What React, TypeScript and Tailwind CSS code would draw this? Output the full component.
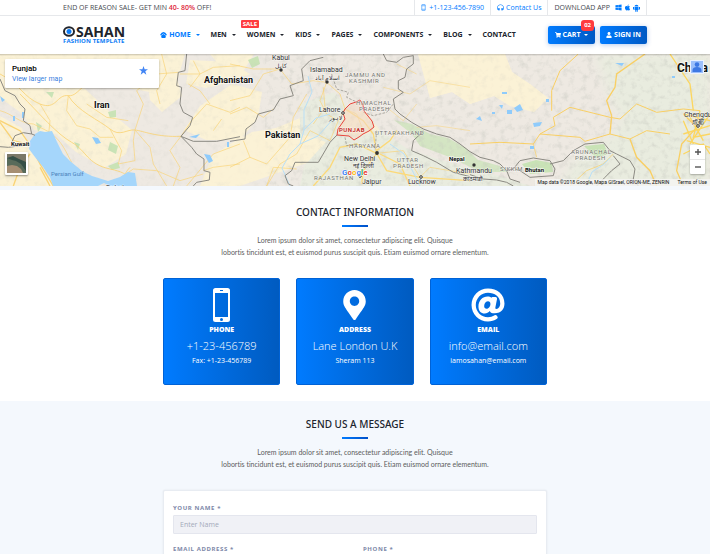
import type { ReactNode } from 'react';
import { FaApple, FaAt, FaHeadphonesAlt, FaMapMarkerAlt, FaShoppingCart, FaUser, FaWindows } from 'react-icons/fa';

function PhoneIcon({ className }: { className: string }) {
  return (
    <svg viewBox="0 0 17 34" className={className} aria-hidden="true">
      <path
        fill="currentColor"
        fillRule="evenodd"
        d="M2.5 0h12A2.5 2.5 0 0 1 17 2.500v29a2.500 2.500 0 0 1-2.500 2.500h-12A2.500 2.500 0 0 1 0 31.500v-29A2.500 2.500 0 0 1 2.500 0zM2 5v24h13V5zM7 2v1h3V2zM8.500 30a1.500 1.500 0 1 0 0 3 1.500 1.500 0 0 0 0-3z"
      />
    </svg>
  );
}

function AndroidIcon() {
  return (
    <svg viewBox="0 0 14 16" className="h-[8px] w-[7px]" aria-hidden="true" fill="currentColor">
      <path d="M3 5a4 3.600 0 0 1 8 0zM3 5.800h8V12H3zM0 6h2v5H0zM12 6h2v5h-2zM4.500 12h2v3.500h-2zM7.500 12h2v3.500h-2z" />
    </svg>
  );
}

function HomeIcon() {
  return (
    <svg viewBox="0 0 18 16" className="h-[6px] w-[7px]" aria-hidden="true" fill="currentColor">
      <path d="M9 0 14 2 18 7 16 9 9 4 2 9 0 7 4 2z" />
      <path d="M9 5.500 15.500 10 14 16H4L2.500 10z" />
    </svg>
  );
}

function Logo() {
  return (
    <a href="#" className="flex shrink-0 flex-col">
      <span className="flex items-center text-[14px] leading-[11px] font-bold text-[#20242c]">
        <svg viewBox="0 0 13 11" className="h-[11px] w-[13px]" role="img" aria-label="O">
          <ellipse cx="6" cy="5.500" rx="5" ry="4.300" fill="none" stroke="#20242c" strokeWidth="2" />
          <circle cx="6" cy="5.500" r="2.500" fill="#0b7bf5" />
        </svg>
        SAHAN
      </span>
      <span className="mt-px text-[6px] leading-[7px] font-bold tracking-wide text-[#0b7bf5]">FASHION TEMPLATE</span>
    </a>
  );
}

function Caret() {
  return <span className="border-x-2 border-t-2 border-x-transparent border-t-current" />;
}

function TopBar() {
  return (
    <div className="border-b border-[#e6e8eb]">
      <div className="mx-auto flex h-[15px] max-w-[584px] items-center justify-between text-[7px] leading-[15px] text-[#44484e]">
        <p>
          END OF REASON SALE- GET MIN <span className="font-semibold text-[#e0283c]">40- 80%</span> OFF!
        </p>
        <div className="flex border-x border-[#e6e8eb]">
          <a href="#" className="flex items-center gap-[3px] px-[6px] text-[#007bff]">
            <svg viewBox="0 0 10 16" className="h-[7px] w-[5px]" aria-hidden="true" fill="none" stroke="currentColor">
              <rect x="1" y="1" width="8" height="14" rx="1.500" strokeWidth="1.200" />
              <path d="M1 4h8M1 12h8" strokeWidth="1.200" />
            </svg>
            +1-123-456-7890
          </a>
          <a href="#" className="flex items-center gap-[2px] border-x border-[#e6e8eb] px-[6px] text-[#007bff]">
            <FaHeadphonesAlt className="size-[7px]" />
            Contact Us
          </a>
          <div className="flex items-center gap-[2px] px-[6px]">
            <span className="mr-[3px]">DOWNLOAD APP</span>
            <a href="#" aria-label="Windows" className="text-[#007bff]"><FaWindows className="size-[7px]" /></a>
            <a href="#" aria-label="Apple" className="text-[#007bff]"><FaApple className="size-[7px]" /></a>
            <a href="#" aria-label="Android" className="text-[#007bff]"><AndroidIcon /></a>
          </div>
        </div>
      </div>
    </div>
  );
}

const links = [
  { label: 'MEN', caret: true },
  { label: 'WOMEN', caret: true, sale: true },
  { label: 'KIDS', caret: true },
  { label: 'PAGES', caret: true },
  { label: 'COMPONENTS', caret: true },
  { label: 'BLOG', caret: true },
  { label: 'CONTACT', caret: false },
];

function Header() {
  return (
    <header>
      <div className="mx-auto flex h-[38px] max-w-[584px] items-center">
        <Logo />
        <nav className="ml-[35px] flex items-center gap-[11px] text-[7px] font-bold text-[#20242c]">
          <a href="#" className="flex items-center gap-[2px] text-[#007bff]">
            <HomeIcon />
            <span className="mr-[3px]">HOME</span>
            <Caret />
          </a>
          {links.map((l) => (
            <a key={l.label} href="#" className="relative flex items-center gap-[5px]">
              {l.label}
              {l.caret && <Caret />}
              {l.sale && (
                <span className="absolute -top-[10px] -left-[6px] rounded-[1px] bg-[#ff3b3f] px-[2px] text-[6px] leading-[8px] text-white">
                  SALE
                </span>
              )}
            </a>
          ))}
        </nav>
        <div className="ml-auto flex gap-[5px] text-[7px] font-bold text-white">
          <button className="relative flex h-[18px] w-[47px] items-center justify-center gap-[2px] rounded-[2px] bg-linear-to-r from-[#007bff] to-[#0059c4] shadow-[0_1px_5px_rgba(0,80,200,0.3)]">
            <FaShoppingCart className="size-[6px]" />
            <span className="mr-[2px]">CART</span>
            <Caret />
            <span className="absolute -top-[6px] right-px rounded-[3px] bg-[#ff3b3f] px-[3px] text-[6px] leading-[11px]">02</span>
          </button>
          <button className="flex h-[18px] w-[47px] items-center justify-center gap-[2px] rounded-[2px] bg-linear-to-r from-[#007bff] to-[#0059c4] shadow-[0_1px_5px_rgba(0,80,200,0.3)]">
            <FaUser className="size-[6px]" />
            SIGN IN
          </button>
        </div>
      </div>
    </header>
  );
}

function MapDrawing() {
  return (
    <svg
      viewBox="0 54 710 132"
      preserveAspectRatio="xMidYMid slice"
      className="block h-[132px] w-full font-[Roboto,sans-serif]"
      role="img"
      aria-label="Map of Punjab"
    >
      <defs>
        <filter id="relief" x="0" y="0" width="100%" height="100%">
          <feTurbulence type="fractalNoise" baseFrequency="0.160" numOctaves="4" seed="8" />
          <feColorMatrix values="0 0 0 0 0.550  0 0 0 0 0.560  0 0 0 0 0.510  1.800 0 0 0 -0.860" />
        </filter>
        <filter id="soft"><feGaussianBlur stdDeviation="5" /></filter>
      </defs>
      <rect y="54" width="710" height="132" fill="#eee9e2" />

      {/* lowland and desert tints */}
      <g fill="#fbf2d6">
        <path d="M0 54H185L178 78 150 92 128 88 108 76 84 88 110 112 132 130 126 154 104 168 76 152 56 134 34 130 20 112 0 98z" />
        <path d="M0 116 22 128 30 150 44 170 54 186H0z" />
        <path d="M184 130 200 106 232 84 262 92 258 118 240 140 206 140z" />
        <path d="M146 70 176 76 182 96 162 112 150 100z" />
        <path d="M230 144 252 132 276 128 300 118 322 128 336 134 322 148 310 162 286 170 240 186H200L212 156z" />
        <path d="M190 60 230 62 250 74 232 82 206 88 186 84z" />
        <path d="M418 54H505L512 72 530 84 548 98 534 112 510 106 494 96 470 104 452 92 430 98 424 76z" />
        <path d="M210 54H254L244 70 220 66z" />
      </g>
      <g fill="#e9ecdf">
        <path d="M300 104 334 92 352 112 380 130 406 148 440 160 500 176 530 186H300L304 166 326 142 300 134z" />
        <path d="M595 54H710V186H560L574 160 606 140 622 120 610 96z" filter="url(#soft)" />
      </g>
      <path fill="#f6efd8" d="M344 110 366 112 380 130 358 136 338 132z" />
      <g fill="#c9e3b6">
        <path d="M394 120 412 124 430 134 448 138 466 148 478 160 500 166 508 172 480 172 452 158 420 146 412 134z" opacity=".7" />
        <path d="M522 164 536 160 552 163 553 172 530 174zM584 146 604 144 608 154 596 158z" />
        <path d="M248 60 258 56 260 64 252 68zM108 112 116 110 116 117 110 118zM110 142 118 146 116 154 108 150zM108 166 118 162 120 168 112 170zM46 92 54 92 52 98zM74 142 80 144 78 150zM36 122 42 126 38 132z" />
      </g>
      <rect x="265" y="54" width="445" height="132" filter="url(#relief)" opacity=".6" />
      <rect x="0" y="54" width="265" height="132" filter="url(#relief)" opacity=".25" />
      <path fill="#fbf2d6" opacity=".6" d="M232 146 254 134 280 132 322 138 306 160 240 182H206z" />
      <path fill="#fbf2d6" opacity=".6" d="M418 54H505L512 72 530 84 548 98 534 112 510 106 494 96 470 104 452 92 430 98 424 76z" />

      {/* roads, left third */}
      <g fill="none" stroke="#f9d375" strokeWidth="2.500" transform="translate(0 54) scale(.3333)">
        <path d="M0 60C60 90 70 130 120 150S170 120 205 125 250 60 320 95M205 125C230 170 300 200 330 225S380 225 405 228 470 250 543 247M60 120C120 180 170 240 215 265S260 330 330 345 360 372 390 340" />
        <path d="M0 170C40 180 60 210 100 210L150 235C190 265 200 300 215 325M330 225 365 290 355 330 405 320 400 260 405 228M405 228 430 150 410 110 470 60 535 55" strokeWidth="2" />
        <path d="M0 200 60 230 95 280 120 330 160 396M0 205 40 260 80 270M90 300 60 340 40 396M120 340 150 396" strokeWidth="4" />
        <path d="M120 150 150 200 145 250M205 125 200 170 230 215 270 225 300 250 340 250M260 150 320 190 385 200M405 228 450 280 460 330 500 396M543 247 510 290 540 340 520 396M360 372 400 345 470 350 540 380 610 360" strokeWidth="2" />
        <path d="M543 247 575 200 620 150 690 175 720 160M630 150 600 110 565 90M570 100 600 60 580 20M720 270 640 300 560 396M720 330 640 340 610 350M640 230 665 195" strokeWidth="2" />
        <path d="M485 0 500 60 470 110 480 150M540 60 600 60 640 40 720 35" strokeWidth="2" />
      </g>
      {/* roads, middle third */}
      <g fill="none" stroke="#f9d375" strokeWidth="2" transform="translate(230 54) scale(.3333)">
        <path d="M0 30 70 45 150 45 185 90 250 80 290 85 330 120 345 165 325 200 300 260 240 230 200 300 150 330 110 396M290 85 270 140 290 180 325 200M0 140 60 125 100 60 150 45M0 180 50 160 100 190 130 165" />
        <path d="M345 165 400 200 430 240 440 298 470 350 570 370 720 380M440 298 400 350 395 390M440 298 380 270 330 280 300 340 250 396M450 300 510 330 540 396M440 290 480 260 500 230" strokeWidth="4" stroke="#fcd978" />
        <path d="M0 340 60 310 110 330 180 250 190 190 230 120M60 310 40 260M110 396 130 340 200 345M345 165 380 180 400 230M440 298 520 290 570 370 600 340 720 360M280 100 285 160 250 210" />
        <path d="M470 160 520 200 560 150M460 100 540 120 600 80 720 100M500 30 560 60M720 230 620 215 560 220" strokeWidth="1.500" />
      </g>
      {/* roads, right third */}
      <g fill="none" stroke="#f9cf63" strokeWidth="3" transform="translate(470 54) scale(.3333)">
        <path d="M325 0 270 50 245 110 245 170M0 270 90 265 190 270 210 240 255 215 250 190 300 160 340 170 420 190 450 195 500 150 560 175 640 165 690 170M210 240 270 245 330 250 345 262 420 240 480 255 530 230 600 240" />
        <path d="M525 0 440 60 435 100 410 140 425 185M425 185 420 240M480 255 500 310 540 350 560 396M640 396 620 350 635 270 680 220 640 180" strokeWidth="4" />
        <path d="M640 180 720 200M640 240 720 215M650 260 720 280M660 190 700 260M690 170 670 250 720 240M720 180 660 270M600 0 640 60 660 90 670 170M640 300 700 270 720 300M640 200 670 270" strokeWidth="4" stroke="#fcd65f" />
        <path d="M300 396 350 350 400 330 430 300M190 270 200 310" strokeWidth="2" />
      </g>

      {/* water */}
      <path
        fill="#a5d6fb"
        d="M35 134 40 131 45 132 52 131 57 142 63 154 70 161 82 171 92 176 108 181 120 177 128 172 135 173 137 186 110 186 104 183 98 186 53 186 50 177 43 167 35 157 29 149 30 141z"
      />
      <g fill="#8fcbfb">
        <path d="M92 137 98 138 101 143 96 144zM204 154 210 155 213 161 209 163zM189 137 200 134 196 138zM227 142h2v5h-2zM0 96 5 100 2 102zM533 123 542 122 540 126 534 127zM615 63 624 63 622 66zM514 108 520 104 523 110 517 112zM499 105h4l-1 4zM476 119 480 116 482 121z" />
        <path d="M502 92h5v2h-5zM546 99h3v3h-3zM672 76h3v2h-3zM492 112h3v2h-3zM530 146h4v3h-4zM13 116h2v5h-2zM22 112h2v6h-2zM507 110h5v4h-5z" />
      </g>
      <g fill="none" stroke="#b9dff6">
        <path d="M290 186 282 168 290 154 300 144 304 130 316 118 330 114M300 144 318 136 334 118M304 130 304 110 312 92 308 76M586 186 592 172 604 164 610 158M390 144 404 154 412 170 420 186" />
      </g>

      {/* borders */}
      <g fill="none" stroke="#8b8982" strokeWidth="3" strokeLinejoin="round">
        <g transform="translate(0 54) scale(.3333)">
          <path d="M560 0 555 50 535 55 530 95 545 100 540 150 550 175 578 190 570 215 543 247 580 262 650 262 720 248M543 247 575 280 590 300 612 315 612 350 630 355 628 378 590 385 580 396M0 75 15 110 45 125 60 150 75 165 70 200 90 215 95 240 105 244M95 240 70 236 45 245 35 265M0 278 25 280 90 272" />
        </g>
        <g transform="translate(230 54) scale(.3333)">
          <path d="M0 262 45 255 48 225 75 205 85 180 130 168 150 135 190 125 180 95 220 80 215 45 240 20 280 10M322 242 300 265 265 325 195 325 185 350 165 365 175 390 190 396M460 0 470 20 500 25 520 10 550 5 550 30 530 45 525 70 505 80 505 105 520 115 490 135 495 165 510 180 545 205 580 225 620 240 660 250 690 270 720 293M580 232 550 260 545 290 580 305 620 325 670 355 720 368" />
          <path d="M305 60 320 105 355 115 350 130 378 143M400 175 430 185 470 175 490 150M345 250 350 275 380 270M440 230 435 290" strokeWidth="2" strokeDasharray="8 4" />
        </g>
        <g transform="translate(470 54) scale(.3333)">
          <path d="M0 293 30 310 70 320 90 330 110 350 130 345 150 320 190 312 240 320 255 345 250 365 180 370 150 350 135 345M240 330 280 320 310 290 345 270 400 265 420 290 440 300 480 320 495 345 490 375 505 396M0 362 40 375 80 378 110 385 130 396M110 350 120 375 150 385M430 305 450 330 425 350 405 370 380 396" />
        </g>
      </g>
      <path
        fill="#f3d9c4"
        fillOpacity=".55"
        stroke="#e8453c"
        strokeLinejoin="round"
        d="M345 109 350 104 356 102 360 100 363 105 364 111 368 116 372 121 374 127 369 131 363 134 359 137 354 140 349 136 337 135 338 129 345 119 343 113z"
      />

      {/* place names */}
      <g fill="#111" fontSize="9" fontWeight="700" stroke="#fff" strokeWidth="1.500" strokeOpacity=".7" paintOrder="stroke">
        <text x="94" y="108">Iran</text>
        <text x="204" y="83">Afghanistan</text>
        <text x="265" y="138">Pakistan</text>
        <text x="677" y="72" fontSize="12">China</text>
        <g fontSize="6">
          <text x="11" y="146">Kuwait</text>
          <text x="449" y="161">Nepal</text>
          <text x="525" y="172">Bhutan</text>
        </g>
      </g>
      <g fill="#333" fontSize="7" stroke="#fff" strokeWidth="1" strokeOpacity=".6" paintOrder="stroke">
        <text x="272" y="60">Kabul</text>
        <text x="275" y="68" fontSize="6">کابل</text>
        <text x="310" y="72">Islamabad</text>
        <text x="315" y="80" fontSize="6">اسلام آباد</text>
        <text x="319" y="112">Lahore</text>
        <text x="329" y="120" fontSize="6">لاہور</text>
        <text x="344" y="161">New Delhi</text>
        <text x="353" y="168" fontSize="6" className="font-['Noto_Sans',sans-serif]">नई दिल्ली</text>
        <text x="362" y="184">Jaipur</text>
        <text x="408" y="184">Lucknow</text>
        <text x="456" y="173">Kathmandu</text>
        <text x="463" y="181" fontSize="6" className="font-['Noto_Sans',sans-serif]">काठमाडौं</text>
        <text x="684" y="117">Chengdu</text>
        <text x="692" y="124" fontSize="6" className="font-['Noto_Sans_CJK_SC',sans-serif]">成都</text>
        <text x="106" y="190">Dubai</text>
      </g>
      <g fill="#74746f" fontSize="6" letterSpacing="0.600" stroke="#fff" strokeWidth="1" strokeOpacity=".5" paintOrder="stroke">
        <text x="345" y="77">JAMMU AND</text>
        <text x="349" y="83">KASHMIR</text>
        <text x="356" y="105">HIMACHAL</text>
        <text x="359" y="111">PRADESH</text>
        <text x="375" y="135">UTTARAKHAND</text>
        <text x="349" y="148">HARYANA</text>
        <text x="397" y="162">UTTAR</text>
        <text x="393" y="168">PRADESH</text>
        <text x="314" y="180">RAJASTHAN</text>
        <text x="500" y="171">SIKKIM</text>
        <text x="571" y="154">ARUNACHAL</text>
        <text x="575" y="160">PRADESH</text>
      </g>
      <text x="339" y="132" fontSize="6" fontWeight="700" letterSpacing="0.500" fill="#c5302b" stroke="#fff" strokeWidth="1" strokeOpacity=".6" paintOrder="stroke">PUNJAB</text>
      <text x="51" y="176" fontSize="6" fill="#4c83bb">Persian Gulf</text>
      <g fill="#333">
        <circle cx="281" cy="70" r="1.700" />
        <circle cx="327" cy="82" r="1.700" />
        <circle cx="377" cy="153" r="1.900" />
        <circle cx="474" cy="165" r="1.700" />
        <g fill="#fff" stroke="#333">
          <circle cx="343" cy="113" r="1.300" />
          <circle cx="360" cy="176" r="1.300" />
          <circle cx="421" cy="177" r="1.300" />
          <circle cx="698" cy="126" r="1.300" />
        </g>
      </g>
      <text x="342" y="175" fontSize="8" fontWeight="700" stroke="#fff" strokeWidth="1.200" paintOrder="stroke">
        <tspan fill="#4285f4">G</tspan><tspan fill="#ea4335">o</tspan><tspan fill="#fbbc05">o</tspan><tspan fill="#4285f4">g</tspan><tspan fill="#34a853">l</tspan><tspan fill="#ea4335">e</tspan>
      </text>
    </svg>
  );
}

function MapSection() {
  return (
    <section className="relative border-b-4 border-[#f4f8fd] font-[Roboto,sans-serif]">
      <MapDrawing />
      <div className="pointer-events-none absolute inset-x-0 top-0 h-[2px] bg-linear-to-b from-black/20 to-transparent" />
      <div className="absolute top-[5px] left-[5px] flex w-[154px] justify-between rounded-[1px] bg-white px-[7px] py-1 shadow-[0_1px_2px_rgba(0,0,0,0.3)]">
        <div>
          <h2 className="text-[8px] leading-[11px] font-medium text-black">Punjab</h2>
          <a href="#" className="block text-[7px] leading-[10px] text-[#3a7fe0]">View larger map</a>
        </div>
        <svg viewBox="0 0 24 24" className="mt-[3px] mr-1 size-[9px]" aria-hidden="true">
          <path fill="#4285f4" d="M12 0l3 8.500h9l-7.200 5.400L19.500 23 12 17.500 4.500 23l2.700-9.100L0 8.500h9z" />
        </svg>
      </div>
      <button aria-label="Satellite view" className="absolute bottom-[11px] left-[5px] size-[23px] overflow-hidden rounded-[1px] border-2 border-white bg-[#586b5a] shadow-[0_1px_2px_rgba(0,0,0,0.4)]">
        <svg viewBox="0 0 19 19" className="size-full" aria-hidden="true">
          <path fill="#7b7868" d="M0 0h19v8l-6-1-6-4-7 1z" />
          <path fill="#354f47" d="M0 4 5 6 9 7 14 10 19 17V8L12 5 6 2z" />
          <path fill="#a58e73" d="M0 19V12l5-1 5 1 4 3 2 4z" />
        </svg>
      </button>
      <button aria-label="Account" className="absolute top-[6px] right-[6px] flex size-[14px] items-center justify-center border border-white/80 bg-[#9cc0fb]">
        <svg viewBox="0 0 12 12" className="size-[12px]" aria-hidden="true" fill="#3d78e3">
          <circle cx="6" cy="3.600" r="2.300" />
          <path d="M1.500 11V9c0-2 2-3 4.500-3s4.500 1 4.500 3v2z" />
        </svg>
      </button>
      <div className="absolute right-[5px] bottom-[12px] flex w-[15px] flex-col rounded-[1px] bg-white text-[#555] shadow-[0_1px_2px_rgba(0,0,0,0.3)]">
        <button aria-label="Zoom in" className="flex h-[15px] items-center justify-center border-b border-[#e6e6e6]">
          <svg viewBox="0 0 6 6" className="size-[6px]"><path d="M3 0v6M0 3h6" stroke="currentColor" strokeWidth="1.400" /></svg>
        </button>
        <button aria-label="Zoom out" className="flex h-[14px] items-center justify-center">
          <svg viewBox="0 0 6 6" className="size-[6px]"><path d="M0 3h6" stroke="currentColor" strokeWidth="1.400" /></svg>
        </button>
      </div>
      <div className="absolute right-0 bottom-0 flex gap-[8px] bg-[#f5f5f3]/80 px-[3px] text-[5px] leading-[7px] text-[#111]">
        <span>Map data ©2018 Google, Mapa GISrael, ORION-ME, ZENRIN</span>
        <a href="#">Terms of Use</a>
      </div>
    </section>
  );
}

function SectionTitle({ children }: { children: ReactNode }) {
  return (
    <div className="flex flex-col items-center text-center">
      <h2 className="font-['Noto_Sans',sans-serif] text-[10px] leading-[16px] font-medium text-[#20242c]">{children}</h2>
      <span className="mt-[5px] mb-[7px] h-[2px] w-[26px] bg-linear-to-r from-[#007bff] to-[#0050c8]" />
      <p className="font-[Lato,sans-serif] text-[7px] leading-[12px] text-[#5c5c5c] [font-variant-ligatures:none]">
        Lorem ipsum dolor sit amet, consectetur adipiscing elit. Quisque
        <br />
        lobortis tincidunt est, et euismod purus suscipit quis. Etiam euismod ornare elementum.
      </p>
    </div>
  );
}

function InfoCard({ icon, title, main, note }: { icon: ReactNode; title: string; main: string; note: string }) {
  return (
    <article className="flex h-[107px] flex-col items-center rounded-[2px] border border-[#0062d6] bg-linear-to-r from-[#007bff] to-[#005bc0] pt-[9px] text-white">
      <div className="flex h-[34px] items-center">{icon}</div>
      <h3 className="mt-[3px] text-[7px] leading-[10px] font-extrabold">{title}</h3>
      <p className="mt-[3px] text-[11px] leading-[16px] font-light">{main}</p>
      <p className="mt-[2px] text-[7px] leading-[10px] font-medium">{note}</p>
    </article>
  );
}

function Field({ id, label, placeholder, type, wide }: { id: string; label: string; placeholder: string; type: string; wide?: boolean }) {
  return (
    <div className={wide ? 'col-span-2' : ''}>
      <label htmlFor={id} className="block text-[6px] leading-[10px] font-bold tracking-widest text-[#7d88a8]">
        {label} *
      </label>
      <input
        id={id}
        type={type}
        placeholder={placeholder}
        className="mt-[2px] block h-[19px] w-full rounded-[1px] border border-[#e4e6ee] bg-[#f0f1f6] px-[6px] text-[7px] text-[#495057] placeholder:text-[#a3a9ba]"
      />
    </div>
  );
}

export default function App() {
  return (
    <div className="h-screen overflow-hidden bg-white font-['Open_Sans','Noto_Sans',sans-serif]">
      <TopBar />
      <Header />
      <MapSection />
      <main>
        <section className="pt-[14px] pb-4">
          <SectionTitle>CONTACT INFORMATION</SectionTitle>
          <div className="mx-auto mt-5 grid max-w-[384px] grid-cols-3 gap-4">
            <InfoCard icon={<PhoneIcon className="h-[34px] w-[17px]" />} title="PHONE" main="+1-23-456789" note="Fax: +1-23-456789" />
            <InfoCard icon={<FaMapMarkerAlt className="h-[30px] w-[23px]" />} title="ADDRESS" main="Lane London U.K" note="Sheram 113" />
            <InfoCard icon={<FaAt className="size-[34px]" />} title="EMAIL" main="info@email.com" note="iamosahan@email.com" />
          </div>
        </section>
        <section className="bg-[#f4f8fd] pt-[15px] pb-5">
          <SectionTitle>SEND US A MESSAGE</SectionTitle>
          <form className="mx-auto mt-5 grid max-w-[384px] grid-cols-2 gap-x-4 gap-y-[10px] rounded-[2px] border border-[#e8ecf2] bg-white px-[9px] py-3 shadow-[0_0_2px_rgba(0,0,0,0.08)]">
            <Field id="name" label="YOUR NAME" placeholder="Enter Name" type="text" wide />
            <Field id="email" label="EMAIL ADDRESS" placeholder="Enter Email" type="email" />
            <Field id="phone" label="PHONE" placeholder="Enter Phone" type="tel" />
          </form>
        </section>
      </main>
    </div>
  );
}
